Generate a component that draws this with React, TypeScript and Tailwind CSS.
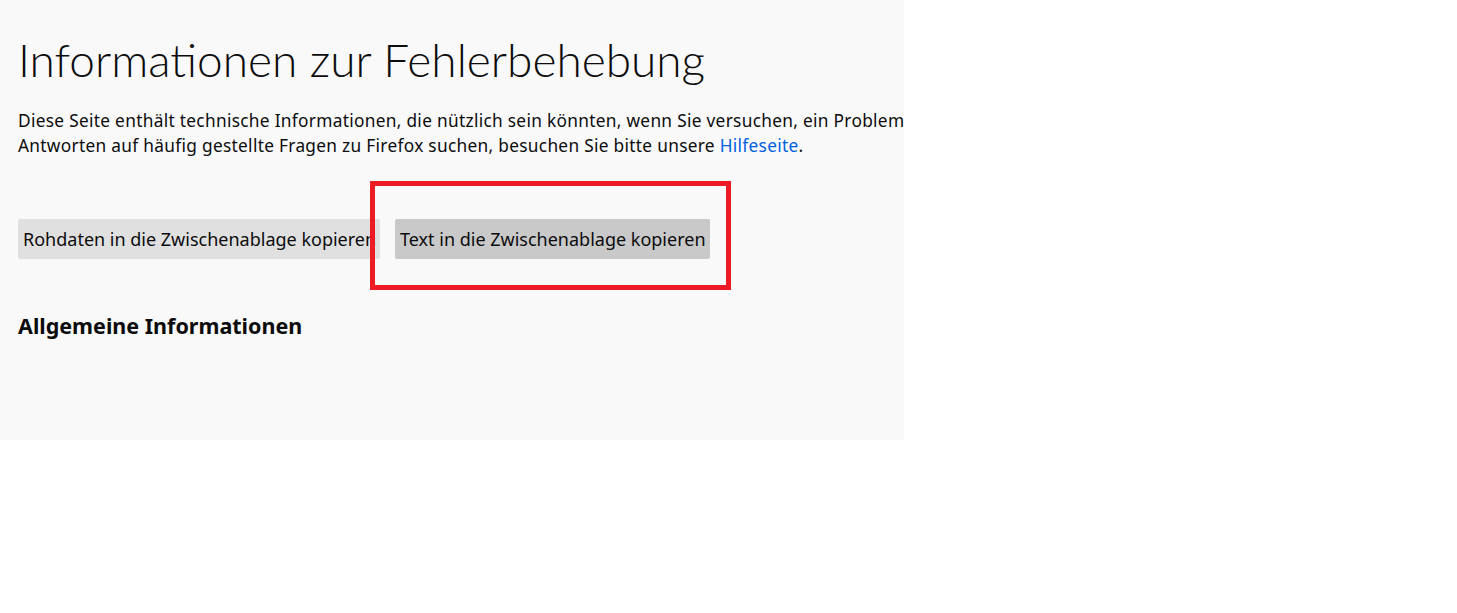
const FONT = { fontFamily: '"Noto Sans", "Open Sans", sans-serif' };
const TITLE_FONT = { fontFamily: 'Lato, "Noto Sans", sans-serif' };

const App = () => {
  return (
    <div className="relative w-[1457px] h-[613px] bg-white" style={FONT}>
      <div className="w-[904px] h-[440px] bg-[#f9f9fa] overflow-hidden px-[18px] pt-[28px] text-[#0c0c0d]">
        <h1 className="text-[46px] font-light leading-[64px] whitespace-nowrap" style={TITLE_FONT}>
          Informationen zur Fehlerbehebung
        </h1>
        <p className="mt-[16px] text-[17.3px] leading-[25px] whitespace-nowrap tracking-[0.3px]">
          Diese Seite enthält technische Informationen, die nützlich sein könnten, wenn Sie versuchen, ein Problem zu lösen. Wenn Sie
          <br />
          Antworten auf häufig gestellte Fragen zu Firefox suchen, besuchen Sie bitte unsere{" "}
          <a className="text-[#0060df]">Hilfeseite</a>.
        </p>
        <div className="mt-[61px] flex gap-[15px]">
          <button className="h-[40px] w-[362px] overflow-hidden whitespace-nowrap rounded-[2px] bg-[#e0e0e1] px-[5px] text-left text-[18px]">
            Rohdaten in die Zwischenablage kopieren
          </button>
          <button className="h-[40px] w-[315px] overflow-hidden whitespace-nowrap rounded-[2px] bg-[#c9c9ca] px-[5px] text-left text-[18px]">
            Text in die Zwischenablage kopieren
          </button>
        </div>
        <h2 className="mt-[52px] text-[21.5px] font-bold leading-[30px]">Allgemeine Informationen</h2>
      </div>
      <div className="absolute left-[370px] top-[181px] h-[109px] w-[361px] border-[5px] border-[#ed1c24]" />
    </div>
  );
};

export default App;
